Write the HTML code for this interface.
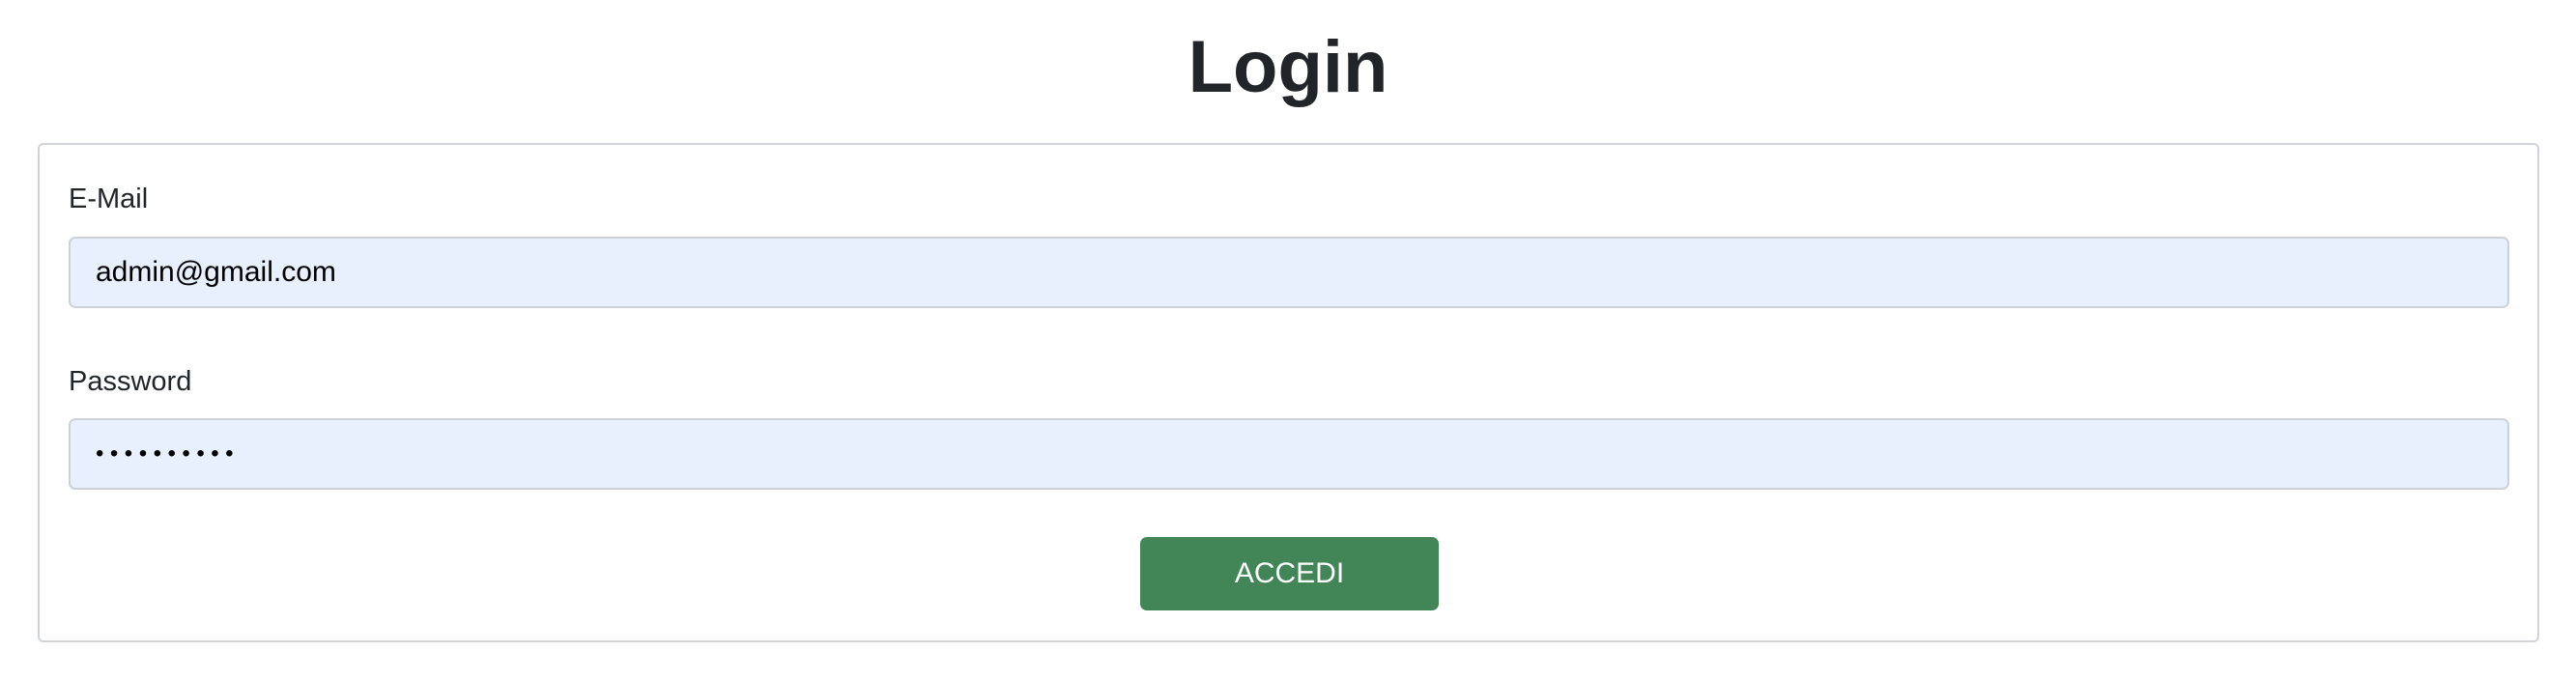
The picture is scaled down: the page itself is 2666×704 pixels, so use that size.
<!DOCTYPE html>
<html><head><meta charset="utf-8"><style>
html,body{margin:0;padding:0;background:#fff;width:2666px;height:704px;overflow:hidden;font-family:"Liberation Sans",sans-serif;color:#212529}
.a{position:absolute}
h1{position:absolute;left:0;width:2666px;top:20px;margin:0;text-align:center;font-size:76px;font-weight:700;line-height:100px;color:#212529}
.card{left:39px;top:148px;width:2589px;height:517px;border:2px solid #d0d4d9;border-radius:6px;box-sizing:border-box}
.lbl{font-size:29px;line-height:36px;left:71px;color:#212529}
.inp{left:71px;width:2526px;height:74px;background:#e8f0fe;border:2px solid #cdd2d8;border-radius:7px;box-sizing:border-box;font-size:30px;line-height:70px;padding-left:26px;color:#000}
.btn{left:1180px;top:556px;width:309px;height:76px;background:#428658;border-radius:7px;color:#fff;font-size:30px;line-height:76px;text-align:center}
</style></head><body>
<h1>Login</h1>
<div class="a card"></div>
<div class="a lbl" style="top:188px">E-Mail</div>
<div class="a inp" style="top:245px">admin@gmail.com</div>
<div class="a lbl" style="top:377px">Password</div>
<div class="a inp" style="top:433px;font-size:24px;letter-spacing:6.5px">••••••••••</div>
<div class="a btn">ACCEDI</div>
</body></html>
